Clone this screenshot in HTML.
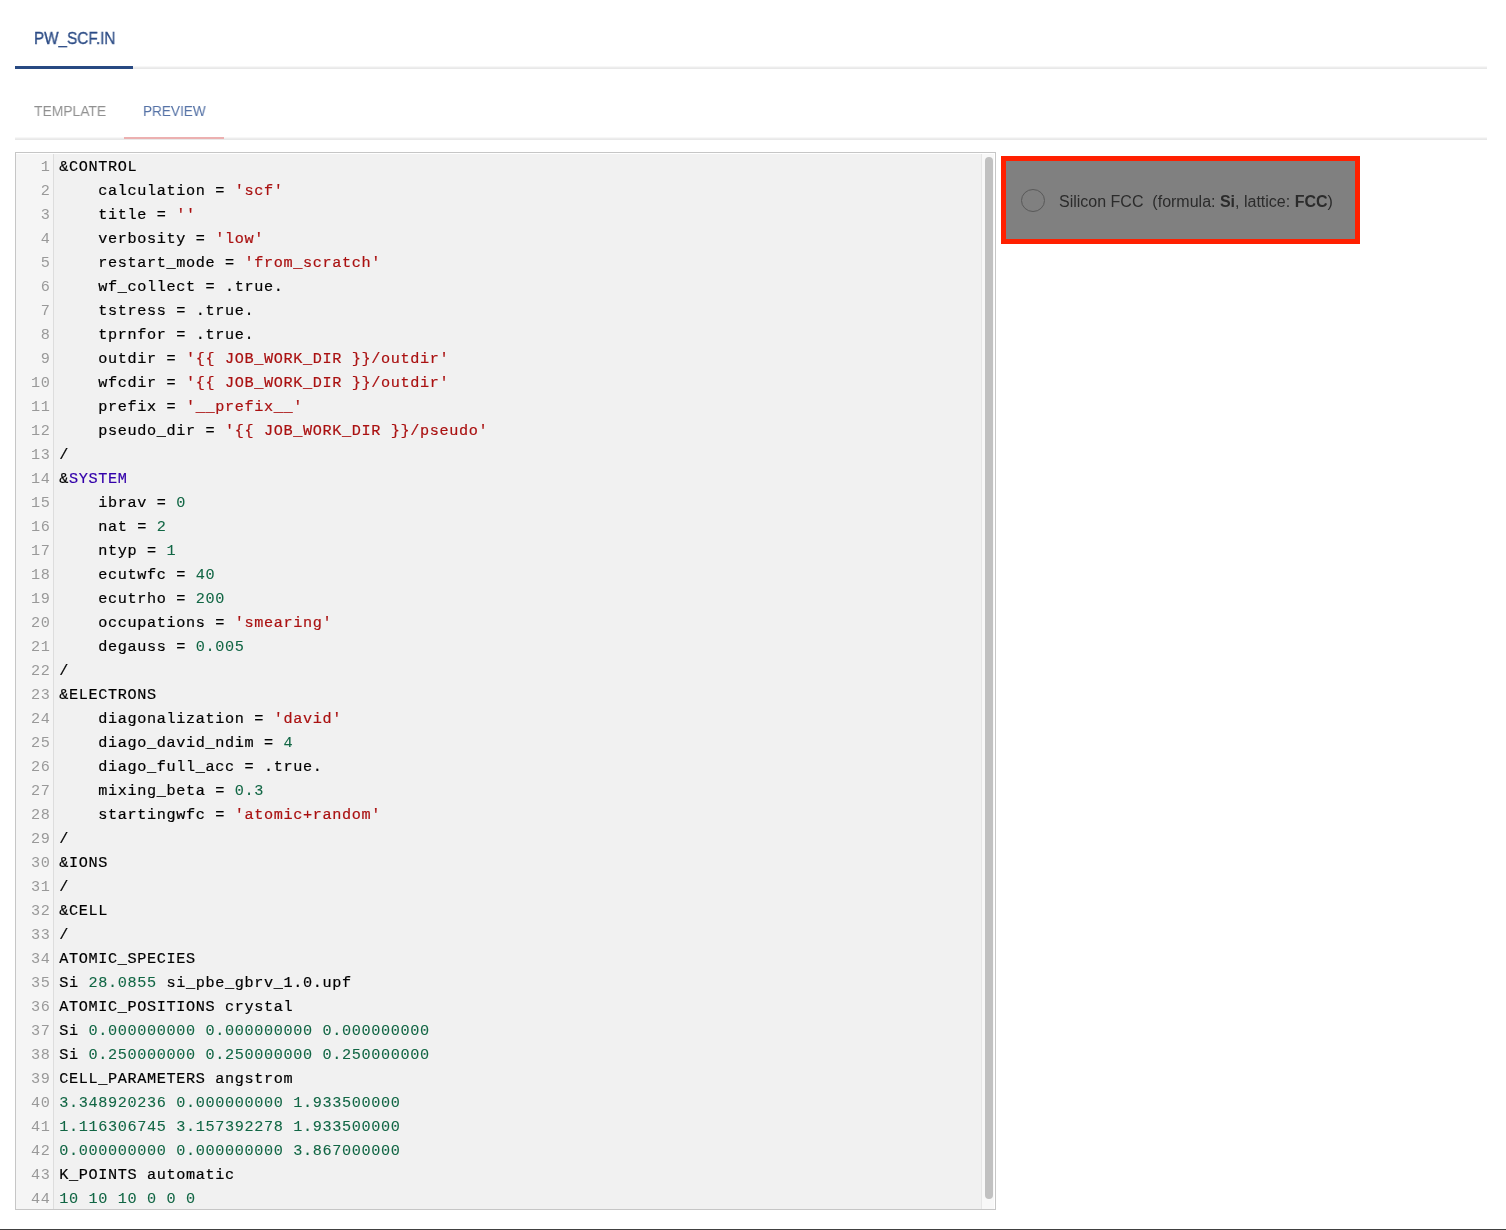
<!DOCTYPE html>
<html><head><meta charset="utf-8">
<style>
*{margin:0;padding:0;box-sizing:border-box}
html,body{width:1506px;height:1230px;overflow:hidden;background:#fff;font-family:"Liberation Sans",sans-serif}
body>div{will-change:transform}
.abs{position:absolute}
#t1{left:34px;top:29px;font-size:16.5px;color:#2b4b85;-webkit-text-stroke:0.35px #2b4b85;white-space:nowrap;transform:scaleX(0.925);transform-origin:0 0}
#t1line{left:15px;top:66px;width:1472px;height:3px;background:linear-gradient(#f7f7f7 0,#f7f7f7 1px,#ededed 1px,#ededed 2px,#e8e8e8 2px)}
#t1ul{left:15px;top:66px;width:118px;height:3px;background:#284982}
#t2a{left:33.5px;top:101.5px;font-size:15.5px;color:#909090;white-space:nowrap;transform:scaleX(0.895);transform-origin:0 0}
#t2b{left:143px;top:101.5px;font-size:15.5px;color:#5572a6;white-space:nowrap;transform:scaleX(0.878);transform-origin:0 0}
#t2line{left:15px;top:137px;width:1472px;height:3px;background:linear-gradient(#f7f7f7 0,#f7f7f7 1px,#ededed 1px,#ededed 2px,#e8e8e8 2px)}
#t2ul{left:124px;top:137px;width:100px;height:2px;background:#ecb0b0}
#ed{left:15px;top:152px;width:981px;height:1058px;border:1px solid #c6c6c6;background:#f1f1f1;overflow:hidden}
#gut{left:0;top:0;width:38px;height:1056px;background:#f5f5f5;border-right:1px solid #dddddd}
#sb{left:965px;top:0;width:13px;height:1056px;background:#f8f8f8;border-left:1px solid #e6e6e6}
#thumb{left:3px;top:4px;width:8px;height:1042px;background:#c1c1c1;border-radius:4px}
.ln{position:absolute;left:0;width:34.4px;text-align:right;color:#999;font-family:"Liberation Mono",monospace;font-size:15.2px;letter-spacing:0.635px;line-height:24px}
.cl{position:absolute;left:43.3px;color:#000;font-family:"Liberation Mono",monospace;font-size:15.2px;letter-spacing:0.635px;line-height:24px;white-space:pre;-webkit-text-stroke:0.2px currentColor}
.s{color:#aa1111}.n{color:#116644;-webkit-text-stroke:0.1px #116644}.b{color:#3300aa}
#card{left:1001px;top:156px;width:359px;height:88px;border:5px solid #ff2000;background:#808080}
#radio{left:1021px;top:189px;width:24px;height:23px}
#ctext{left:1059px;top:193px;font-size:16px;color:#2b2b2b;white-space:pre}
#bot{left:0;top:1229px;width:1506px;height:1px;background:#404040}
</style></head><body>
<div class="abs" id="t1">PW_SCF.IN</div>
<div class="abs" id="t1line"></div>
<div class="abs" id="t1ul"></div>
<div class="abs" id="t2a">TEMPLATE</div>
<div class="abs" id="t2b">PREVIEW</div>
<div class="abs" id="t2line"></div>
<div class="abs" id="t2ul"></div>
<div class="abs" id="ed">
<div class="abs" id="gut"></div>
<div id="code" style="position:absolute;left:0;top:2px;width:960px">
<div class="ln" style="top:0px">1</div><div class="cl" style="top:0px">&amp;CONTROL</div>
<div class="ln" style="top:24px">2</div><div class="cl" style="top:24px">    calculation = <span class="s">'scf'</span></div>
<div class="ln" style="top:48px">3</div><div class="cl" style="top:48px">    title = <span class="s">''</span></div>
<div class="ln" style="top:72px">4</div><div class="cl" style="top:72px">    verbosity = <span class="s">'low'</span></div>
<div class="ln" style="top:96px">5</div><div class="cl" style="top:96px">    restart_mode = <span class="s">'from_scratch'</span></div>
<div class="ln" style="top:120px">6</div><div class="cl" style="top:120px">    wf_collect = .true.</div>
<div class="ln" style="top:144px">7</div><div class="cl" style="top:144px">    tstress = .true.</div>
<div class="ln" style="top:168px">8</div><div class="cl" style="top:168px">    tprnfor = .true.</div>
<div class="ln" style="top:192px">9</div><div class="cl" style="top:192px">    outdir = <span class="s">'{{ JOB_WORK_DIR }}/outdir'</span></div>
<div class="ln" style="top:216px">10</div><div class="cl" style="top:216px">    wfcdir = <span class="s">'{{ JOB_WORK_DIR }}/outdir'</span></div>
<div class="ln" style="top:240px">11</div><div class="cl" style="top:240px">    prefix = <span class="s">'__prefix__'</span></div>
<div class="ln" style="top:264px">12</div><div class="cl" style="top:264px">    pseudo_dir = <span class="s">'{{ JOB_WORK_DIR }}/pseudo'</span></div>
<div class="ln" style="top:288px">13</div><div class="cl" style="top:288px">/</div>
<div class="ln" style="top:312px">14</div><div class="cl" style="top:312px">&amp;<span class="b">SYSTEM</span></div>
<div class="ln" style="top:336px">15</div><div class="cl" style="top:336px">    ibrav = <span class="n">0</span></div>
<div class="ln" style="top:360px">16</div><div class="cl" style="top:360px">    nat = <span class="n">2</span></div>
<div class="ln" style="top:384px">17</div><div class="cl" style="top:384px">    ntyp = <span class="n">1</span></div>
<div class="ln" style="top:408px">18</div><div class="cl" style="top:408px">    ecutwfc = <span class="n">40</span></div>
<div class="ln" style="top:432px">19</div><div class="cl" style="top:432px">    ecutrho = <span class="n">200</span></div>
<div class="ln" style="top:456px">20</div><div class="cl" style="top:456px">    occupations = <span class="s">'smearing'</span></div>
<div class="ln" style="top:480px">21</div><div class="cl" style="top:480px">    degauss = <span class="n">0.005</span></div>
<div class="ln" style="top:504px">22</div><div class="cl" style="top:504px">/</div>
<div class="ln" style="top:528px">23</div><div class="cl" style="top:528px">&amp;ELECTRONS</div>
<div class="ln" style="top:552px">24</div><div class="cl" style="top:552px">    diagonalization = <span class="s">'david'</span></div>
<div class="ln" style="top:576px">25</div><div class="cl" style="top:576px">    diago_david_ndim = <span class="n">4</span></div>
<div class="ln" style="top:600px">26</div><div class="cl" style="top:600px">    diago_full_acc = .true.</div>
<div class="ln" style="top:624px">27</div><div class="cl" style="top:624px">    mixing_beta = <span class="n">0.3</span></div>
<div class="ln" style="top:648px">28</div><div class="cl" style="top:648px">    startingwfc = <span class="s">'atomic+random'</span></div>
<div class="ln" style="top:672px">29</div><div class="cl" style="top:672px">/</div>
<div class="ln" style="top:696px">30</div><div class="cl" style="top:696px">&amp;IONS</div>
<div class="ln" style="top:720px">31</div><div class="cl" style="top:720px">/</div>
<div class="ln" style="top:744px">32</div><div class="cl" style="top:744px">&amp;CELL</div>
<div class="ln" style="top:768px">33</div><div class="cl" style="top:768px">/</div>
<div class="ln" style="top:792px">34</div><div class="cl" style="top:792px">ATOMIC_SPECIES</div>
<div class="ln" style="top:816px">35</div><div class="cl" style="top:816px">Si <span class="n">28.0855</span> si_pbe_gbrv_1.0.upf</div>
<div class="ln" style="top:840px">36</div><div class="cl" style="top:840px">ATOMIC_POSITIONS crystal</div>
<div class="ln" style="top:864px">37</div><div class="cl" style="top:864px">Si <span class="n">0.000000000</span> <span class="n">0.000000000</span> <span class="n">0.000000000</span></div>
<div class="ln" style="top:888px">38</div><div class="cl" style="top:888px">Si <span class="n">0.250000000</span> <span class="n">0.250000000</span> <span class="n">0.250000000</span></div>
<div class="ln" style="top:912px">39</div><div class="cl" style="top:912px">CELL_PARAMETERS angstrom</div>
<div class="ln" style="top:936px">40</div><div class="cl" style="top:936px"><span class="n">3.348920236</span> <span class="n">0.000000000</span> <span class="n">1.933500000</span></div>
<div class="ln" style="top:960px">41</div><div class="cl" style="top:960px"><span class="n">1.116306745</span> <span class="n">3.157392278</span> <span class="n">1.933500000</span></div>
<div class="ln" style="top:984px">42</div><div class="cl" style="top:984px"><span class="n">0.000000000</span> <span class="n">0.000000000</span> <span class="n">3.867000000</span></div>
<div class="ln" style="top:1008px">43</div><div class="cl" style="top:1008px">K_POINTS automatic</div>
<div class="ln" style="top:1032px">44</div><div class="cl" style="top:1032px"><span class="n">10</span> <span class="n">10</span> <span class="n">10</span> <span class="n">0</span> <span class="n">0</span> <span class="n">0</span></div>
</div>
<div class="abs" id="sb"><div class="abs" id="thumb"></div></div>
<div class="abs" style="left:0;top:0;width:979px;height:1px;background:#fff"></div>
<div class="abs" style="left:978px;top:0;width:1px;height:1056px;background:#fff"></div>
</div>
<div class="abs" id="card"></div>
<svg class="abs" id="radio" width="24" height="23" viewBox="0 0 24 23"><ellipse cx="12" cy="11.5" rx="11.5" ry="11" fill="none" stroke="#585858" stroke-width="1"/></svg>
<div class="abs" id="ctext">Silicon FCC  (formula: <b>Si</b>, lattice: <b>FCC</b>)</div>
<div class="abs" id="bot"></div>
</body></html>
